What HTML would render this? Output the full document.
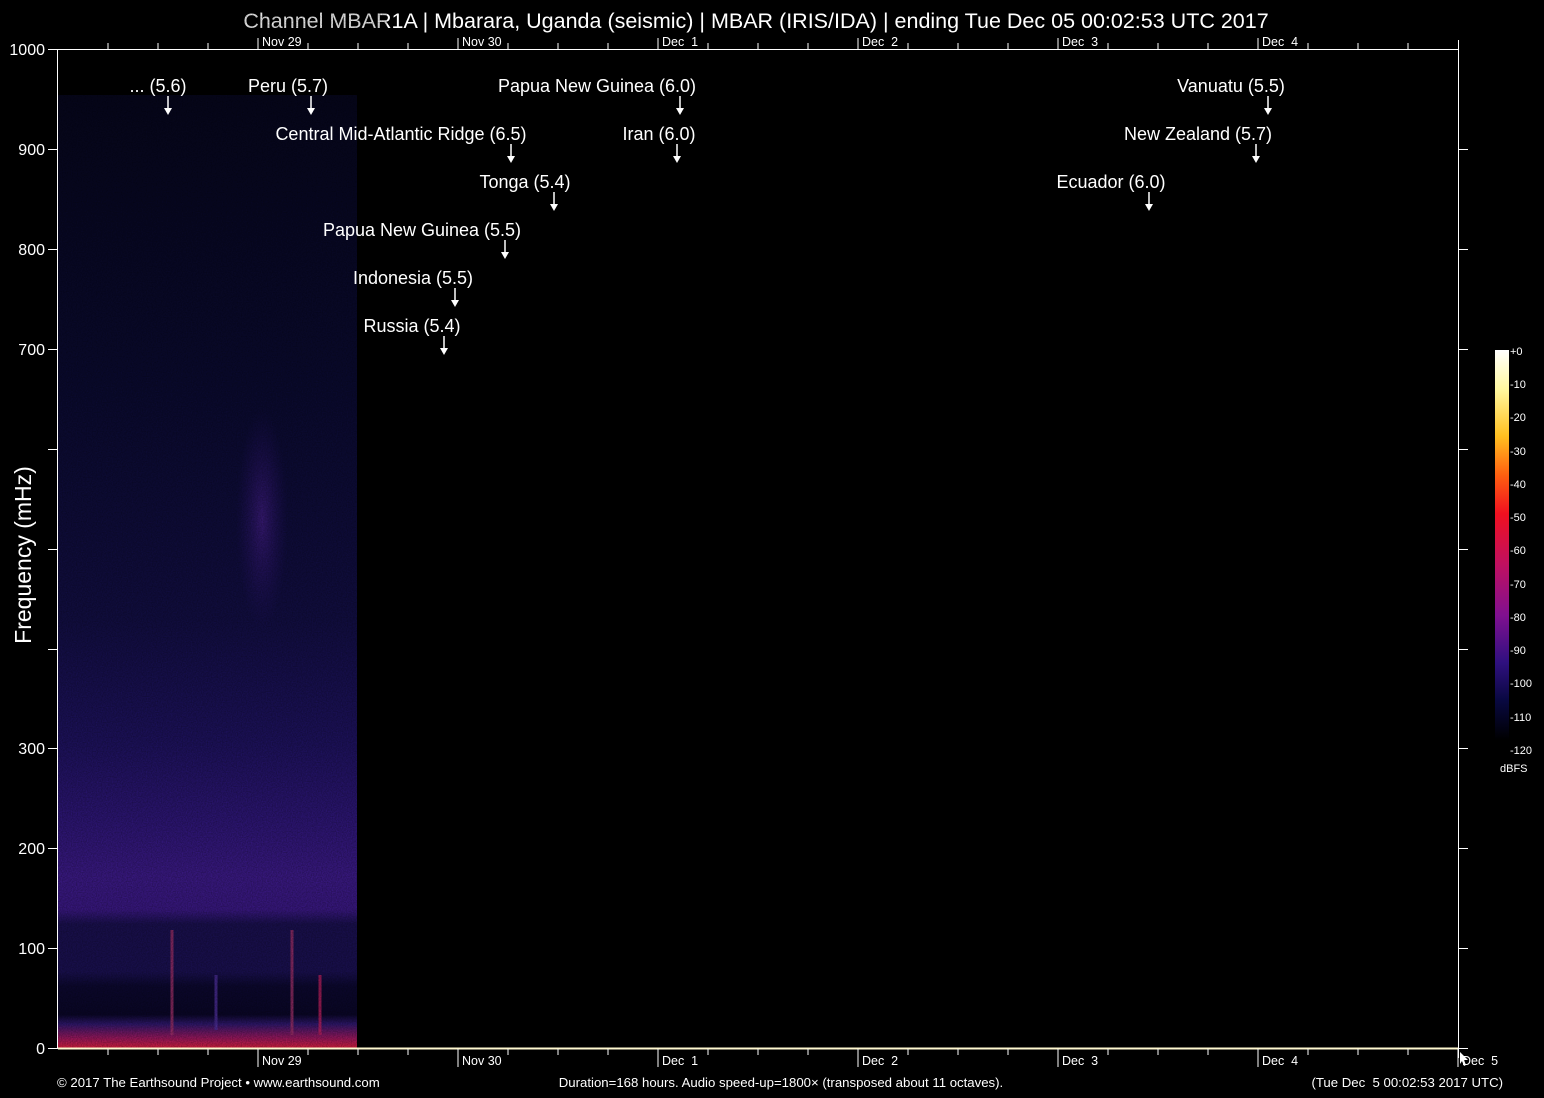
<!DOCTYPE html>
<html><head><meta charset="utf-8"><style>
html,body{margin:0;padding:0;background:#000;}
svg{display:block}
text{font-family:"Liberation Sans",sans-serif;fill:#fff;white-space:pre}
</style></head><body>
<svg width="1544" height="1098" viewBox="0 0 1544 1098" xmlns="http://www.w3.org/2000/svg">
<defs>
<linearGradient id="sg" x1="0" y1="0" x2="0" y2="1">
<stop offset="0" stop-color="#06061c"/>
<stop offset="0.3" stop-color="#0a0a30"/>
<stop offset="0.55" stop-color="#120e44"/>
<stop offset="0.68" stop-color="#1e1260"/>
<stop offset="0.76" stop-color="#2e1678"/>
<stop offset="0.82" stop-color="#3c1a88"/>
<stop offset="0.855" stop-color="#3a1884"/>
<stop offset="0.87" stop-color="#1a1050"/>
<stop offset="0.92" stop-color="#1a1052"/>
<stop offset="0.935" stop-color="#0c0830"/>
<stop offset="0.965" stop-color="#0a0628"/>
<stop offset="0.975" stop-color="#301870"/>
<stop offset="0.99" stop-color="#a01860"/>
<stop offset="1" stop-color="#e02040"/>
</linearGradient>
<linearGradient id="cb" x1="0" y1="0" x2="0" y2="1">
<stop offset="0" stop-color="#ffffff"/>
<stop offset="0.1" stop-color="#fff8a0"/>
<stop offset="0.22" stop-color="#ffc020"/>
<stop offset="0.32" stop-color="#ff6010"/>
<stop offset="0.42" stop-color="#f01020"/>
<stop offset="0.55" stop-color="#c01060"/>
<stop offset="0.68" stop-color="#801090"/>
<stop offset="0.8" stop-color="#301080"/>
<stop offset="0.9" stop-color="#080840"/>
<stop offset="1" stop-color="#000000"/>
</linearGradient>
<radialGradient id="blob" cx="0.5" cy="0.5" r="0.5">
<stop offset="0" stop-color="#4a2090" stop-opacity="0.7"/>
<stop offset="1" stop-color="#2a1270" stop-opacity="0"/>
</radialGradient>
<filter id="nz"><feTurbulence type="fractalNoise" baseFrequency="0.8" numOctaves="1" result="t"/><feColorMatrix type="matrix" values="0 0 0 0 0  0 0 0 0 0  0 0 0 0 0  0 0 0 0.5 -0.05"/></filter>
</defs>
<text x="756" y="28" font-size="21.5" text-anchor="middle">Channel MBAR1A | Mbarara, Uganda (seismic) | MBAR (IRIS/IDA) | ending Tue Dec 05 00:02:53 UTC 2017</text>
<rect x="58" y="95" width="299" height="953" fill="url(#sg)"/>
<ellipse cx="262" cy="520" rx="26" ry="110" fill="url(#blob)"/>
<g stroke-width="3" opacity="0.8">
<line x1="172" y1="930" x2="172" y2="1035" stroke="#a0306a"/>
<line x1="292" y1="930" x2="292" y2="1035" stroke="#a0306a"/>
<line x1="320" y1="975" x2="320" y2="1035" stroke="#c02060"/>
<line x1="216" y1="975" x2="216" y2="1030" stroke="#5030a0"/>
</g>
<rect x="58" y="95" width="299" height="953" filter="url(#nz)"/>
<g stroke="#fff" stroke-width="1" fill="none">
<line x1="58" y1="49.5" x2="1458" y2="49.5"/>
<line x1="57.5" y1="49" x2="57.5" y2="1048"/>
<line x1="1458.5" y1="40" x2="1458.5" y2="1058"/>
<line x1="58" y1="1048.5" x2="1458" y2="1048.5" stroke="#fff8d0" stroke-width="2"/>
<path d="M108 49v-6M158 49v-6M208 49v-6M258 49v-11M308 49v-6M358 49v-6M408 49v-6M458 49v-11M508 49v-6M558 49v-6M608 49v-6M658 49v-11M708 49v-6M758 49v-6M808 49v-6M858 49v-11M908 49v-6M958 49v-6M1008 49v-6M1058 49v-11M1108 49v-6M1158 49v-6M1208 49v-6M1258 49v-11M1308 49v-6M1358 49v-6M1408 49v-6"/>
<path d="M108 1049v6M158 1049v6M208 1049v6M258 1049v18M308 1049v6M358 1049v6M408 1049v6M458 1049v18M508 1049v6M558 1049v6M608 1049v6M658 1049v18M708 1049v6M758 1049v6M808 1049v6M858 1049v18M908 1049v6M958 1049v6M1008 1049v6M1058 1049v18M1108 1049v6M1158 1049v6M1208 1049v6M1258 1049v18M1308 1049v6M1358 1049v6M1408 1049v6M1458 1049v18"/>
<path d="M48 49.5h10M48 149.5h10M48 249.5h10M48 349.5h10M48 449.5h10M48 549.5h10M48 649.5h10M48 748.5h10M48 848.5h10M48 948.5h10M48 1048.5h10"/>
<path d="M1458 149.5h10M1458 249.5h10M1458 349.5h10M1458 449.5h10M1458 549.5h10M1458 649.5h10M1458 748.5h10M1458 848.5h10M1458 948.5h10M1458 1048.5h10"/>
</g>
<g font-size="12.5">
<text x="262" y="46">Nov 29</text><text x="462" y="46">Nov 30</text><text x="662" y="46">Dec  1</text><text x="862" y="46">Dec  2</text><text x="1062" y="46">Dec  3</text><text x="1262" y="46">Dec  4</text>
<text x="262" y="1065">Nov 29</text><text x="462" y="1065">Nov 30</text><text x="662" y="1065">Dec  1</text><text x="862" y="1065">Dec  2</text><text x="1062" y="1065">Dec  3</text><text x="1262" y="1065">Dec  4</text><text x="1462" y="1065">Dec  5</text>
</g>
<g font-size="16" text-anchor="end">
<text x="45" y="55">1000</text><text x="45" y="155">900</text><text x="45" y="255">800</text><text x="45" y="355">700</text>
<text x="45" y="754">300</text><text x="45" y="854">200</text><text x="45" y="954">100</text><text x="45" y="1054">0</text>
</g>
<text transform="translate(31,555) rotate(-90)" font-size="23" text-anchor="middle">Frequency (mHz)</text>
<g font-size="18" text-anchor="middle">
<text x="158" y="92">... (5.6)</text>
<text x="288" y="92">Peru (5.7)</text>
<text x="597" y="92">Papua New Guinea (6.0)</text>
<text x="1231" y="92">Vanuatu (5.5)</text>
<text x="401" y="140">Central Mid-Atlantic Ridge (6.5)</text>
<text x="659" y="140">Iran (6.0)</text>
<text x="1198" y="140">New Zealand (5.7)</text>
<text x="525" y="188">Tonga (5.4)</text>
<text x="1111" y="188">Ecuador (6.0)</text>
<text x="422" y="236">Papua New Guinea (5.5)</text>
<text x="413" y="284">Indonesia (5.5)</text>
<text x="412" y="332">Russia (5.4)</text>
</g>
<g stroke="#fff" stroke-width="1.5">
<line x1="168" y1="96" x2="168" y2="110"/><line x1="311" y1="96" x2="311" y2="110"/><line x1="680" y1="96" x2="680" y2="110"/><line x1="1268" y1="96" x2="1268" y2="110"/>
<line x1="511" y1="144" x2="511" y2="158"/><line x1="677" y1="144" x2="677" y2="158"/><line x1="1256" y1="144" x2="1256" y2="158"/>
<line x1="554" y1="192" x2="554" y2="206"/><line x1="1149" y1="192" x2="1149" y2="206"/>
<line x1="505" y1="240" x2="505" y2="254"/><line x1="455" y1="288" x2="455" y2="302"/><line x1="444" y1="336" x2="444" y2="350"/>
</g>
<g fill="#fff">
<path d="M164 108h8l-4 7z"/><path d="M307 108h8l-4 7z"/><path d="M676 108h8l-4 7z"/><path d="M1264 108h8l-4 7z"/>
<path d="M507 156h8l-4 7z"/><path d="M673 156h8l-4 7z"/><path d="M1252 156h8l-4 7z"/>
<path d="M550 204h8l-4 7z"/><path d="M1145 204h8l-4 7z"/>
<path d="M501 252h8l-4 7z"/><path d="M451 300h8l-4 7z"/><path d="M440 348h8l-4 7z"/>
<path d="M1460 1052l8 8h-4l2 5-2 1-2-5-2 3z"/>
</g>
<rect x="1495" y="350" width="14" height="390" fill="url(#cb)"/>
<g font-size="11" font-family="Liberation Mono" fill="#ddd">
<text x="1510" y="355">+0</text><text x="1510" y="388">-10</text><text x="1510" y="421">-20</text><text x="1510" y="455">-30</text><text x="1510" y="488">-40</text><text x="1510" y="521">-50</text><text x="1510" y="554">-60</text><text x="1510" y="588">-70</text><text x="1510" y="621">-80</text><text x="1510" y="654">-90</text><text x="1510" y="687">-100</text><text x="1510" y="721">-110</text><text x="1510" y="754">-120</text>
<text x="1500" y="772">dBFS</text>
</g>
<g font-size="13.2">
<text x="57" y="1087">© 2017 The Earthsound Project • www.earthsound.com</text>
<text x="781" y="1087" text-anchor="middle">Duration=168 hours. Audio speed-up=1800× (transposed about 11 octaves).</text>
<text x="1503" y="1087" text-anchor="end">(Tue Dec  5 00:02:53 2017 UTC)</text>
</g>
</svg>
</body></html>
